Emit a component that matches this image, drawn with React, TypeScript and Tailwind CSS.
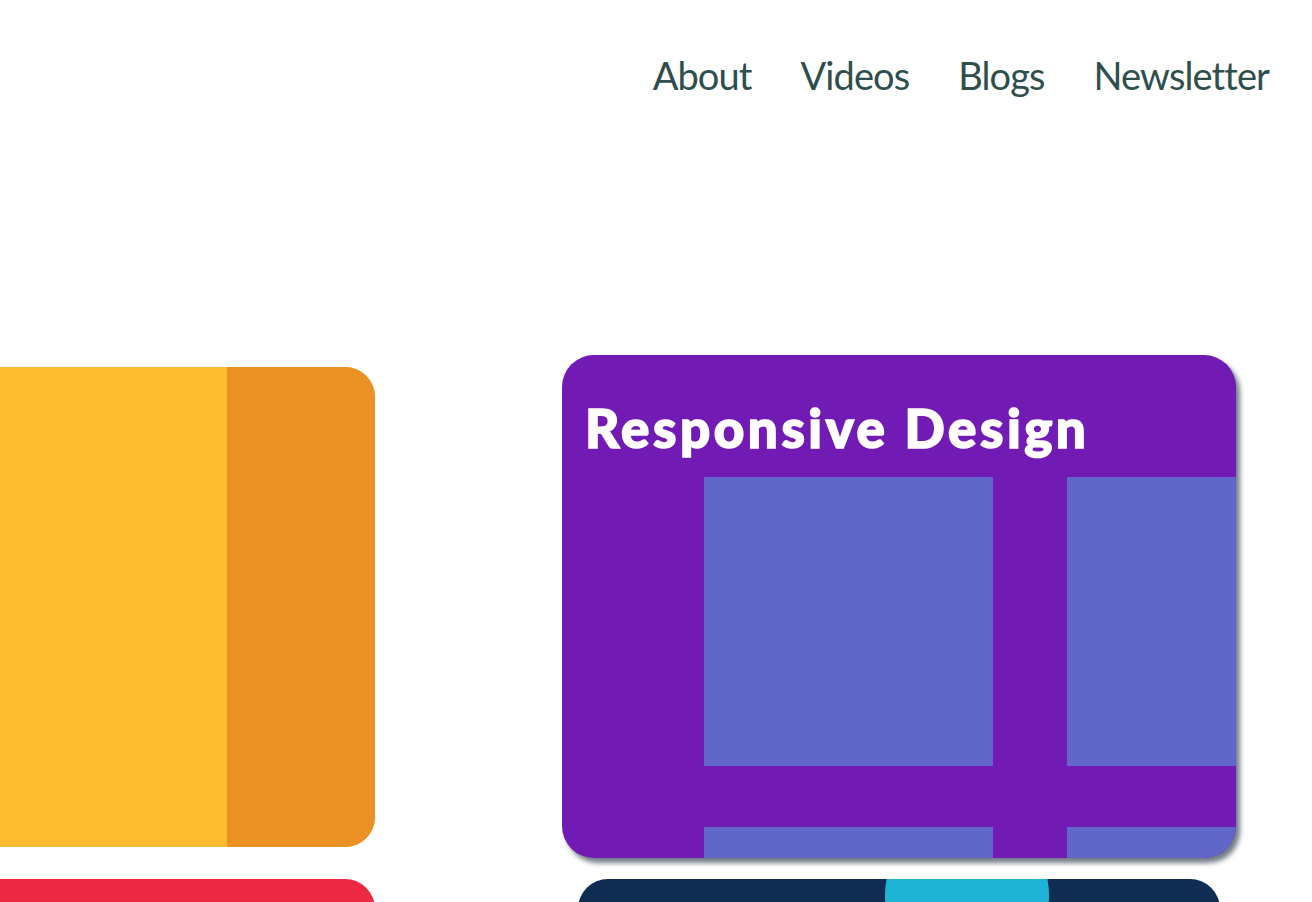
const navItems = ["About", "Videos", "Blogs", "Newsletter"];

export default function App() {
  return (
    <div className="relative h-[902px] w-full overflow-hidden bg-white font-['Lato','Noto_Sans',sans-serif]">
      <header className="flex justify-end pr-[43px] pt-[56px]">
        <nav className="flex gap-[49px]">
          {navItems.map((item) => (
            <a key={item} href="#" className="text-[38px] leading-none tracking-[-0.9px] text-[#2f4f4f]">
              {item}
            </a>
          ))}
        </nav>
      </header>

      <main className="mt-[261px] flex items-start">
        {/* left column, runs off the left edge */}
        <div className="-ml-[300px] mt-[12px] flex w-[675px] shrink-0 flex-col gap-[32px]">
          <div className="flex h-[480px] overflow-hidden rounded-[30px] bg-[#fdbb30]">
            <div className="flex-1" />
            <div className="w-[148px] bg-[#eb9124]" />
          </div>
          <div className="h-[120px] rounded-[30px] bg-[#ec2843]" />
        </div>

        {/* right column */}
        <div className="ml-[187px] flex w-[674px] shrink-0 flex-col gap-[21px]">
          <div className="h-[503px] overflow-hidden rounded-[32px] bg-[#721ab4] shadow-[4px_5px_5px_rgba(40,55,70,0.65)]">
            <h2 className="px-[23px] pt-[46px] text-[53px] font-black leading-none tracking-[3.5px] text-white [-webkit-text-stroke:1.6px_white]">
              Responsive Design
            </h2>
            <div className="ml-[142px] mt-[23px] grid w-max grid-cols-[289px_289px] gap-x-[74px] gap-y-[61px]">
              <div className="h-[289px] bg-[#6067c8]" />
              <div className="h-[289px] bg-[#6067c8]" />
              <div className="h-[289px] bg-[#6067c8]" />
              <div className="h-[289px] bg-[#6067c8]" />
            </div>
          </div>
          <div className="px-[16px]">
            <div className="relative h-[120px] overflow-hidden rounded-[30px] bg-[#0f2c52]">
              <div className="absolute left-[307px] -top-[66px] h-[164px] w-[164px] rounded-full bg-[#1db4d6]" />
            </div>
          </div>
        </div>
      </main>
    </div>
  );
}
